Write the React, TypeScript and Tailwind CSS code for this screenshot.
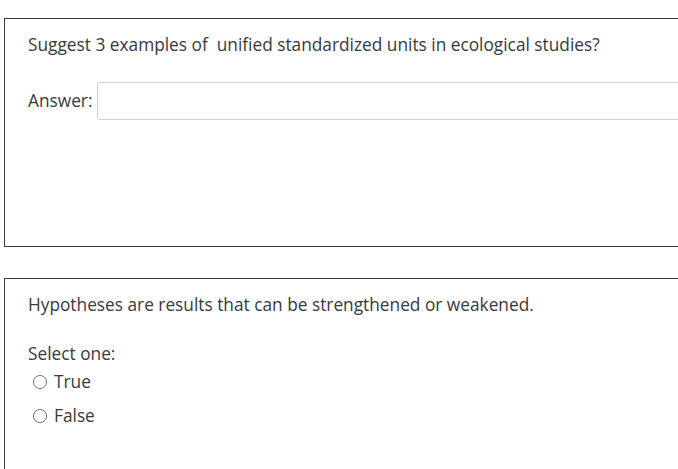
import { useState } from 'react';

type Choice = 'true' | 'false' | null;

export default function App() {
  const [answer, setAnswer] = useState('');
  const [choice, setChoice] = useState<Choice>(null);

  return (
    <div
      className="w-[678px] h-[469px] overflow-hidden bg-white text-[17.3px] leading-[26px] text-[#373a3c]"
      style={{ fontFamily: '"Open Sans", "Liberation Sans", sans-serif' }}
    >
      <div className="pl-1 pt-[18px] flex flex-col gap-[31px]">
        <div className="w-[740px] h-[229px] border border-[#343a40] pl-[23px] pt-[13px]">
          <p>Suggest 3 examples of&nbsp; unified standardized units in ecological studies?</p>
          <div className="mt-[24px] flex items-center gap-[5px]">
            <label htmlFor="answer">Answer:</label>
            <input
              id="answer"
              type="text"
              value={answer}
              onChange={(e) => setAnswer(e.target.value)}
              className="w-[640px] h-[38px] border border-[#ced4da] rounded-[3px] px-3 outline-none"
            />
          </div>
        </div>

        <div className="w-[740px] h-[200px] border border-[#343a40] pl-[23px] pt-[13px]">
          <p>Hypotheses are results that can be strengthened or weakened.</p>
          <div className="mt-[23px]">Select one:</div>
          <div className="flex flex-col gap-[8px] pl-[5px] mt-[2px]">
            {[
              { id: 'true' as Choice, label: 'True' },
              { id: 'false' as Choice, label: 'False' },
            ].map((opt) => (
              <button
                key={opt.label}
                type="button"
                onClick={() => setChoice(opt.id)}
                className="flex items-center gap-[7px] text-left"
              >
                <span className="w-[14px] h-[14px] rounded-full border border-[#767676] flex items-center justify-center">
                  {choice === opt.id && <span className="w-[8px] h-[8px] rounded-full bg-[#0f6cbf]" />}
                </span>
                <span>{opt.label}</span>
              </button>
            ))}
          </div>
        </div>
      </div>
    </div>
  );
}
